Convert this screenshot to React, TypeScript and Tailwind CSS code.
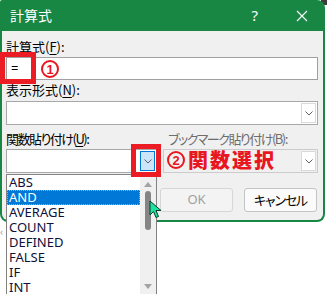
import React from "react";

const jp = "font-['Noto_Sans_CJK_JP',sans-serif]";

const Chevron = ({ color = "#606060" }: { color?: string }) => (
  <svg width="8" height="5" viewBox="0 0 8 5">
    <path d="M0.5 0.5 L4 4 L7.5 0.5" fill="none" stroke={color} strokeWidth="1" />
  </svg>
);

const Combo = ({ className = "", active = false, disabled = false }: { className?: string; active?: boolean; disabled?: boolean }) => (
  <div
    className={`flex h-[24px] border ${disabled ? "border-[#cccccc] bg-[#f0f0f0]" : "border-[#a8a8a8] bg-white"} ${className}`}
  >
    <div className="flex-1" />
    <div
      className={`my-[1px] mr-[1px] flex w-[15px] items-center justify-center border ${
        active ? "border-[#0078d7] bg-[#cce4f7]" : "border-[#d9d9d9] bg-white"
      }`}
    >
      <Chevron />
    </div>
  </div>
);

// red hand-drawn style circled number used in the annotations
const Circled = ({ n }: { n: string }) => (
  <span className="inline-flex h-[18px] w-[18px] items-center justify-center rounded-full border-[2px] border-[#e8161e] font-['Liberation_Sans',sans-serif] text-[13px] font-bold leading-none text-[#e8161e]">
    {n}
  </span>
);

const items = ["ABS", "AND", "AVERAGE", "COUNT", "DEFINED", "FALSE", "IF", "INT"];

export default function App() {
  return (
    <div className={`relative h-[294px] w-[327px] overflow-hidden bg-white ${jp}`}>
      <div className="absolute right-0 top-0 h-[5px] w-[6px] bg-[#3c3c3c]" />

      {/* dialog */}
      <div className="relative w-[325px] [font-feature-settings:'palt']">
        <div className="flex h-[31px] items-center rounded-tr-[8px] rounded-tl-[2px] bg-[#188744] pl-[10px] text-[14px] text-white">
          <span>計算式</span>
          <span className="ml-auto mr-[38px] font-['Noto_Sans',sans-serif] text-[15px]">?</span>
          <svg width="12" height="12" viewBox="0 0 12 12" className="mr-[17px]">
            <path d="M1 1 L11 11 M11 1 L1 11" stroke="white" strokeWidth="1.1" />
          </svg>
        </div>

        <div className="h-[191px] rounded-b-[8px] border-x-2 border-b-2 border-[#188744] bg-[#f0f0f0] pl-[4px] pr-[5px] pt-[6px] text-[13px] text-black">
          <div className="flex h-[20px] items-center">
            計算式(<span className="underline underline-offset-2">F</span>):
          </div>
          <div className="flex h-[23px] items-center border border-[#a0a0a0] bg-white pl-[4px] font-['Noto_Sans',sans-serif]">=</div>

          <div className="flex h-[20px] items-center">
            表示形式(<span className="underline underline-offset-2">N</span>):
          </div>
          <Combo className="mt-[1px]" />

          <div className="mt-[4px] grid h-[20px] grid-cols-[151px_1fr] items-center whitespace-nowrap tracking-[-1.5px]">
            <div>
              関数貼り付け(<span className="underline underline-offset-2">U</span>):
            </div>
            <div className="pl-[11px] text-[#6d6d6d]">ブックマーク貼り付け(B):</div>
          </div>
          <div className="grid grid-cols-[151px_1fr] gap-[6px]">
            <Combo active />
            <Combo disabled />
          </div>

          <div className="mt-[15px] flex justify-end gap-[11px] pr-[1px]">
            <div className="flex h-[24px] w-[73px] items-center justify-center rounded-[3px] border border-[#d6d6d6] bg-[#f3f3f3] font-['Noto_Sans',sans-serif] text-[#a0a0a0]">
              OK
            </div>
            <div className="flex h-[24px] w-[73px] items-center justify-center rounded-[3px] border border-[#c4c4c4] bg-[#fbfbfb] tracking-[-1.2px]">
              キャンセル
            </div>
          </div>
        </div>
      </div>

      {/* spreadsheet glimpse */}
      <div className="absolute left-0 top-[226px] text-[11px] leading-none text-[#9a9a9a]">‹</div>

      {/* dropdown list */}
      <div className="absolute left-[6px] top-[174px] flex h-[130px] w-[151px] border border-[#828282] bg-white">
        <div className="flex-1 font-['Noto_Sans',sans-serif] text-[13px] text-[#10103a]">
          {items.map((it) => (
            <div
              key={it}
              className={`h-[15px] pl-[2px] leading-[15px] ${
                it === "AND" ? "bg-[#0078d7] text-white outline-1 -outline-offset-1 outline-dotted outline-[#f0a030]" : ""
              }`}
            >
              {it}
            </div>
          ))}
        </div>
        <div className="relative w-[16px] bg-[#f0f0f0]">
          <svg width="8" height="5" viewBox="0 0 8 5" className="absolute left-[4px] top-[7px]">
            <path d="M0 5 L4 0 L8 5 Z" fill="#a3a3a3" />
          </svg>
          <div className="absolute left-[5px] top-[16px] h-[39px] w-[6px] rounded-full bg-[#858585]" />
          <svg width="8" height="5" viewBox="0 0 8 5" className="absolute left-[4px] top-[109px]">
            <path d="M0 0 L8 0 L4 5 Z" fill="#a3a3a3" />
          </svg>
        </div>
      </div>

      {/* annotations */}
      <div className="absolute left-0 top-[52px] h-[32px] w-[36px] border-[5px] border-[#ec1c24]" />
      <div className="absolute left-[41px] top-[60px] flex">
        <Circled n="1" />
      </div>
      <div className="absolute left-[131px] top-[144px] h-[33px] w-[30px] border-[5px] border-[#ec1c24]" />
      <div className="absolute left-[167px] top-[148px] flex items-center gap-[3px]">
        <Circled n="2" />
        <span className="text-[20px] font-black leading-[24px] tracking-[2px] text-[#e8161e]">関数選択</span>
      </div>

      {/* mouse pointer */}
      <svg width="14" height="20" viewBox="0 0 14 20" className="absolute left-[149px] top-[200px]">
        <path d="M1 1 L1 15 L4.5 11.5 L7 17.5 L9.5 16.5 L7 10.5 L12 10.5 Z" fill="#1fe0a0" stroke="#0b3a2a" strokeWidth="1" strokeLinejoin="round" />
      </svg>
    </div>
  );
}
